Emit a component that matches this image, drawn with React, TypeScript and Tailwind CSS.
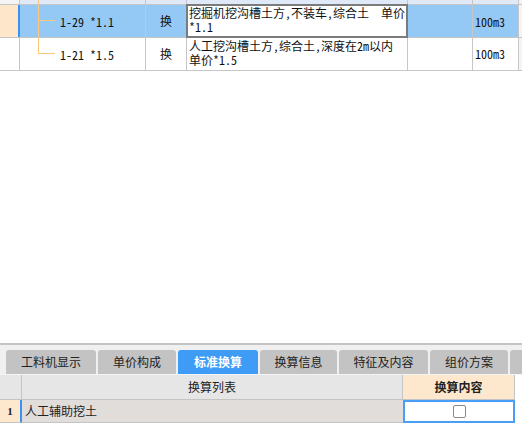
const mono = { fontFamily: '"Noto Sans Mono CJK SC", "Liberation Mono", "Noto Sans CJK SC", monospace' };

function TreeCell({ label, first }: { label: string; first?: boolean }) {
  return (
    <div className="relative w-[126px] h-full border-r border-[#c6c6c6] flex items-center pl-[40px] text-[12px] text-[#111]">
      <span
        className={`absolute left-[18px] top-0 w-px bg-[#fcc77f] ${first ? "h-full" : "h-[16px]"}`}
      />
      <span className="absolute left-[19px] top-[15px] w-[16px] h-px bg-[#fcc77f]" />
      <span className="leading-none pt-[1px]">{label}</span>
    </div>
  );
}

export default function App() {
  const tabs = [
    { name: "工料机显示", w: "w-[90px]" },
    { name: "单价构成", w: "w-[78px]" },
    { name: "标准换算", w: "w-[80px]", active: true },
    { name: "换算信息", w: "w-[77px]" },
    { name: "特征及内容", w: "w-[89px]" },
    { name: "组价方案", w: "w-[78px]" },
    { name: "", w: "w-[20px]" },
  ];

  return (
    <div
      className="w-[522px] h-[430px] bg-white overflow-hidden flex flex-col"
      style={{ fontFamily: '"Noto Sans CJK SC", sans-serif' }}
    >
      {/* top grid */}
      <div style={mono} className="flex flex-col">
        <div className="flex h-[5px] border-b border-[#c6c6c6]">
          <div className="w-[20px] h-full border-r border-[#c6c6c6] bg-[#f4f4f4]" />
          <div className="relative w-[126px] h-full border-r border-[#c6c6c6] bg-[#dfe9f7]">
            <span className="absolute left-[18px] top-0 w-px h-full bg-[#fcc77f]" />
          </div>
          <div className="w-[41px] h-full border-r border-[#c6c6c6] bg-[#dfe9f7]" />
          <div className="w-[221px] h-full border-r border-[#c6c6c6] bg-[#dfe9f7]" />
          <div className="w-[65px] h-full border-r border-[#c6c6c6] bg-[#dfe9f7]" />
          <div className="w-[46px] h-full border-r border-[#c6c6c6] bg-[#dfe9f7]" />
          <div className="flex-1 h-full bg-[#f4f4f4]" />
        </div>

        <div className="flex h-[33px] border-b border-[#c6c6c6] bg-[#95c9f5]">
          <div className="w-[20px] h-full border-r-2 border-[#3a93ee] bg-[#fde6c9]" />
          <TreeCell label="1-29 *1.1" first />
          <div className="w-[41px] h-full border-r border-[#c6c6c6] flex items-center justify-center text-[12px] text-[#111]">
            换
          </div>
          <div className="relative w-[221px] h-full border-r border-[#c6c6c6] bg-white">
            <div className="absolute -left-px -top-px -right-px -bottom-px border-2 border-[#7b7b7b]" />
            <div className="pl-[2px] pt-[1px] text-[12px] leading-[14px] text-[#111] whitespace-pre">
              {"挖掘机挖沟槽土方,不装车,综合土　单价\n*1.1"}
            </div>
          </div>
          <div className="w-[65px] h-full border-r border-[#c6c6c6]" />
          <div className="w-[46px] h-full border-r border-[#c6c6c6] flex items-center pl-[2px] pt-[2px] text-[12px] text-[#111]">
            100m3
          </div>
          <div className="flex-1 h-full bg-[#f4f4f4]" />
        </div>

        <div className="flex h-[33px] border-b border-[#c6c6c6] bg-white">
          <div className="w-[20px] h-full border-r border-[#c6c6c6]" />
          <TreeCell label="1-21 *1.5" />
          <div className="w-[41px] h-full border-r border-[#c6c6c6] flex items-center justify-center text-[12px] text-[#111]">
            换
          </div>
          <div className="w-[221px] h-full border-r border-[#c6c6c6]">
            <div className="pl-[2px] pt-[1px] text-[12px] leading-[14px] text-[#111] whitespace-pre">
              {"人工挖沟槽土方,综合土,深度在2m以内\n单价*1.5"}
            </div>
          </div>
          <div className="w-[65px] h-full border-r border-[#c6c6c6]" />
          <div className="w-[46px] h-full border-r border-[#c6c6c6] flex items-center pl-[2px] text-[12px] text-[#111]">
            100m3
          </div>
          <div className="flex-1 h-full bg-[#f4f4f4]" />
        </div>
      </div>

      <div className="h-[272px]" />

      {/* bottom panel */}
      <div className="h-[2px] bg-[#c4c4c4]" />
      <div className="flex gap-[2px] pl-[6px] pt-[5px] bg-[#f0f0f0]">
        {tabs.map((t, i) => (
          <div
            key={i}
            className={`${t.w} h-[24px] shrink-0 rounded-t-[3px] flex items-center justify-center text-[12px] ${
              t.active ? "bg-[#3e9cf6] text-white font-bold" : "bg-[#c3c3c3] text-[#222]"
            }`}
          >
            {t.name}
          </div>
        ))}
      </div>

      <div className="flex h-[26px] border-t border-[#f4f4f4]">
        <div className="w-[22px] h-full border-r border-b border-[#c4c4c4] bg-[#e6e6e6]" />
        <div className="w-[381px] h-full border-r border-b border-[#c4c4c4] bg-[#e6e6e6] flex items-center justify-center text-[12px] text-[#222]">
          换算列表
        </div>
        <div className="w-[112px] h-full border-r border-b border-[#c4c4c4] bg-[#fde8cd] flex items-center justify-center text-[12px] font-bold text-[#222]">
          换算内容
        </div>
        <div className="flex-1" />
      </div>

      <div className="flex h-[23px]">
        <div className="w-[22px] h-full border-r-2 border-b border-b-[#c4c4c4] border-r-[#3a93ee] bg-[#fde8cd] flex items-center justify-center text-[11px] font-bold text-[#222]" style={{ fontFamily: '"Liberation Serif", serif' }}>
          1
        </div>
        <div className="w-[381px] h-full border-b border-[#c4c4c4] bg-[#e1dddb] flex items-center pl-[3px] text-[12px] text-[#222]">
          人工辅助挖土
        </div>
        <div className="w-[112px] h-full border-2 border-[#4b9ef5] bg-white flex items-center justify-center">
          <div className="w-[13px] h-[13px] rounded-[2px] border border-[#8a8a8a] bg-white" />
        </div>
        <div className="flex-1" />
      </div>
    </div>
  );
}
